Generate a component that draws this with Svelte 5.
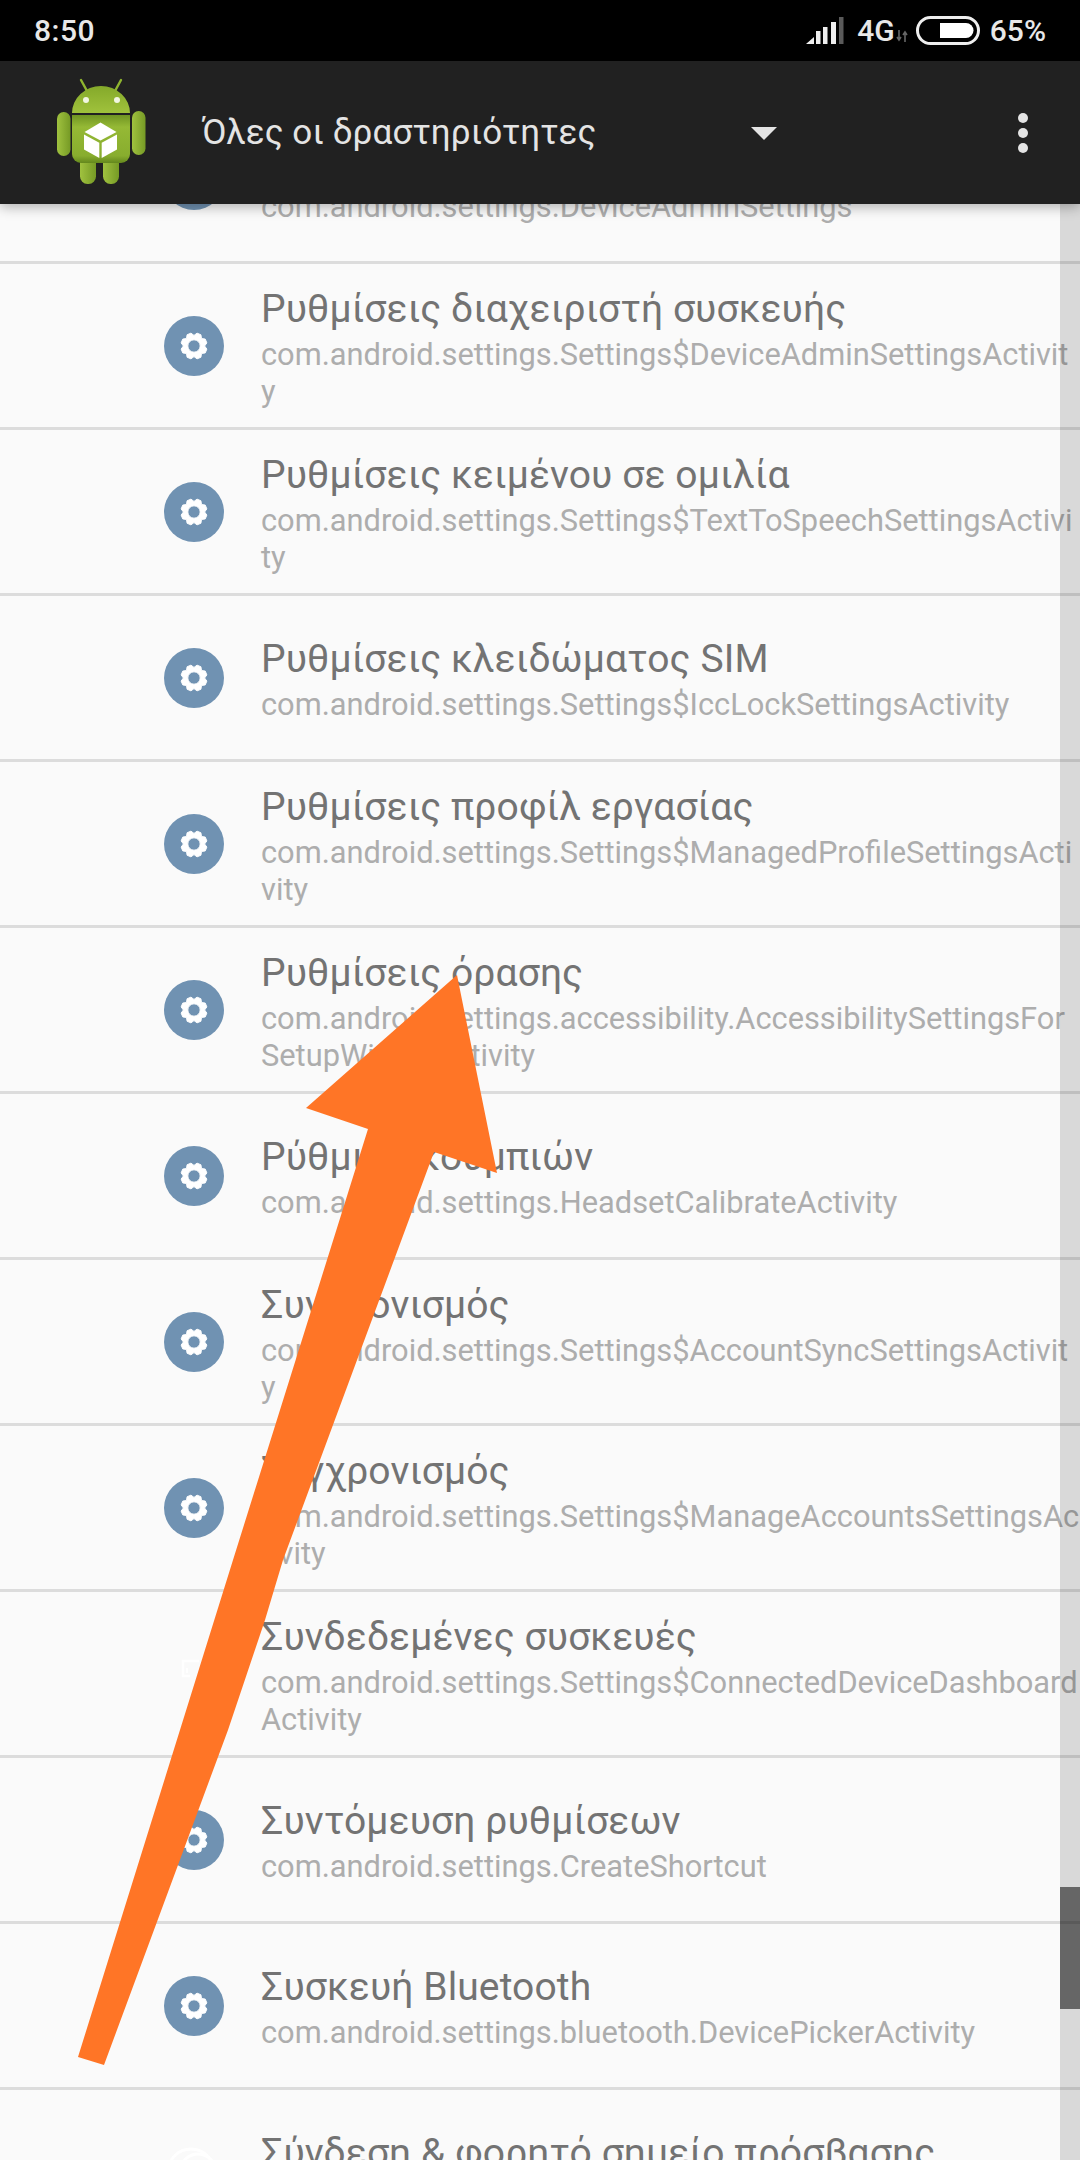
<script>
  const rows = [
    { title: 'Διαχειριστές συσκευής', lines: ['com.android.settings.DeviceAdminSettings'], icon: 'gear' },
    { title: 'Ρυθμίσεις διαχειριστή συσκευής', lines: ['com.android.settings.Settings$DeviceAdminSettingsActivit', 'y'], icon: 'gear' },
    { title: 'Ρυθμίσεις κειμένου σε ομιλία', lines: ['com.android.settings.Settings$TextToSpeechSettingsActivi', 'ty'], icon: 'gear' },
    { title: 'Ρυθμίσεις κλειδώματος SIM', lines: ['com.android.settings.Settings$IccLockSettingsActivity'], icon: 'gear' },
    { title: 'Ρυθμίσεις προφίλ εργασίας', lines: ['com.android.settings.Settings$ManagedProfileSettingsActi', 'vity'], icon: 'gear' },
    { title: 'Ρυθμίσεις όρασης', lines: ['com.android.settings.accessibility.AccessibilitySettingsFor', 'SetupWizardActivity'], icon: 'gear' },
    { title: 'Ρύθμιση κουμπιών', lines: ['com.android.settings.HeadsetCalibrateActivity'], icon: 'gear' },
    { title: 'Συγχρονισμός', lines: ['com.android.settings.Settings$AccountSyncSettingsActivit', 'y'], icon: 'gear' },
    { title: 'Συγχρονισμός', lines: ['com.android.settings.Settings$ManageAccountsSettingsAc', 'tivity'], icon: 'gear' },
    { title: 'Συνδεδεμένες συσκευές', lines: ['com.android.settings.Settings$ConnectedDeviceDashboard', 'Activity'], icon: 'device' },
    { title: 'Συντόμευση ρυθμίσεων', lines: ['com.android.settings.CreateShortcut'], icon: 'gear' },
    { title: 'Συσκευή Bluetooth', lines: ['com.android.settings.bluetooth.DevicePickerActivity'], icon: 'gear' },
    { title: 'Σύνδεση & φορητό σημείο πρόσβασης', lines: ['com.android.settings.Settings$WirelessSettingsActivity'], icon: 'link' }
  ];

  function gearPath() {
    const teeth = 8;
    const pts = [];
    for (let i = 0; i < teeth; i++) {
      const a = ((i + 0.5) / teeth) * Math.PI * 2;
      const s = (Math.PI * 2) / teeth;
      [[-0.5, 10.6], [-0.2, 13.2], [0.2, 13.2], [0.5, 10.6]].forEach(([o, r]) => {
        const t = a + o * s;
        pts.push((Math.sin(t) * r).toFixed(2) + ' ' + (-Math.cos(t) * r).toFixed(2));
      });
    }
    const hole = 'M-6.2 0a6.2 6.2 0 1 0 12.4 0a6.2 6.2 0 1 0 -12.4 0z';
    return 'M' + pts.join('L') + 'z' + hole;
  }
  const gear = gearPath();
</script>

<div class="screen">
  <div class="status">
    <span class="time">8:50</span>
    <div class="status-right">
      <svg class="signal" width="38" height="28" viewBox="0 0 38 28">
        <path d="M0 27 L8 27 L8 20 Z" fill="#eee" />
        <rect x="10" y="14" width="4.5" height="13" fill="#eee" />
        <rect x="17" y="10" width="4.5" height="17" fill="#eee" />
        <rect x="25" y="5" width="5" height="22" fill="#eee" />
        <rect x="33" y="0" width="4.5" height="27" fill="#5a5a5a" />
      </svg>
      <span class="net">4G</span>
      <svg class="updown" width="12" height="12" viewBox="0 0 12 12">
        <path d="M3 0v9M1 7l2 3 2-3" fill="none" stroke="#666" stroke-width="1.6" />
        <path d="M9 12V3M7 5l2-3 2 3" fill="none" stroke="#666" stroke-width="1.6" />
      </svg>
      <svg class="battery" width="64" height="29" viewBox="0 0 64 29">
        <rect x="1.5" y="1.5" width="61" height="26" rx="13" fill="none" stroke="#eee" stroke-width="3" />
        <path d="M24 7 H50 A7.5 7.5 0 0 1 50 22 H24 Z" fill="#fff" />
      </svg>
      <span class="pct">65%</span>
    </div>
  </div>

  <header class="toolbar">
    <svg class="logo" width="120" height="125" viewBox="0 0 120 125">
      <defs>
        <linearGradient id="g-head" x1="0" y1="0" x2="0" y2="1">
          <stop offset="0" stop-color="#84a92a" />
          <stop offset="1" stop-color="#a0c23c" />
        </linearGradient>
        <linearGradient id="g-body" x1="0" y1="0" x2="0" y2="1">
          <stop offset="0" stop-color="#6f9422" />
          <stop offset="0.25" stop-color="#95b935" />
          <stop offset="0.85" stop-color="#88ad2e" />
          <stop offset="1" stop-color="#64881d" />
        </linearGradient>
        <linearGradient id="g-limb" x1="0" y1="0" x2="1" y2="0">
          <stop offset="0" stop-color="#a0c23f" />
          <stop offset="1" stop-color="#769a25" />
        </linearGradient>
      </defs>
      <path d="M41 10 L47 21 M81 10 L75 21" stroke="#8fb52f" stroke-width="2.4" stroke-linecap="round" />
      <path d="M32 43 A29 27 0 0 1 90 43 Z" fill="url(#g-head)" />
      <circle cx="46" cy="30" r="3" fill="#f2f6e2" />
      <circle cx="77" cy="30" r="3" fill="#f2f6e2" />
      <rect x="17" y="42" width="13.5" height="44" rx="6.7" fill="url(#g-limb)" />
      <rect x="92" y="41" width="13.5" height="44" rx="6.7" fill="url(#g-limb)" />
      <rect x="40" y="84" width="16" height="30" rx="7.5" fill="url(#g-limb)" />
      <rect x="63" y="84" width="16" height="30" rx="7.5" fill="url(#g-limb)" />
      <path d="M32 45 H90 V84 A9 9 0 0 1 81 93 H41 A9 9 0 0 1 32 84 Z" fill="url(#g-body)" />
      <path d="M60.5 52.5 L76.5 62 L60.5 70.5 L44.5 62 Z" fill="#fff" />
      <path d="M44 64.5 L59.3 72.8 V88 L44 79.5 Z" fill="#fff" />
      <path d="M77 64.5 L61.7 72.8 V88 L77 79.5 Z" fill="#fff" />
    </svg>
    <span class="spinner-title">Όλες οι δραστηριότητες</span>
    <span class="caret"></span>
    <span class="more"><i></i><i></i><i></i></span>
  </header>

  <div class="list">
    {#each rows as row}
      <div class="row">
        <div class="icon-slot">
          {#if row.icon === 'gear'}
            <svg width="60" height="60" viewBox="-30 -30 60 60">
              <circle r="30" fill="#7092b2" />
              <path d={gear} fill="#fff" fill-rule="evenodd" stroke="#fff" stroke-width="1" stroke-linejoin="round" />
            </svg>
          {:else if row.icon === 'device'}
            <svg width="60" height="60" viewBox="-30 -30 60 60">
              <path d="M5 -13 H-11 V2 H-4" fill="none" stroke="#fff" stroke-width="2.5" />
              <path d="M-7 -6 V-1" fill="none" stroke="#fff" stroke-width="2" />
            </svg>
          {:else}
            <svg width="60" height="60" viewBox="-30 -30 60 60">
              <circle r="23" cx="-3" fill="none" stroke="#fff" stroke-width="3" />
              <circle r="18" cx="4" fill="none" stroke="#fff" stroke-width="3" />
            </svg>
          {/if}
        </div>
        <div class="text">
          <div class="title">{row.title}</div>
          {#each row.lines as line}
            <div class="sub">{line}</div>
          {/each}
        </div>
      </div>
    {/each}
  </div>

  <div class="scroll-track"><div class="scroll-thumb"></div></div>

  <svg class="arrow" width="1080" height="2160" viewBox="0 0 1080 2160">
    <path d="M457 975 L497 1173 L434 1152 L283 1560 L265 1620 L228 1730 L104 2065 L78 2057 L233 1560 L368 1129 L306 1108 Z" fill="#ff7526" />
  </svg>
</div>

<style>
  :global(body) {
    margin: 0;
    background: #fafafa;
  }
  .screen {
    position: relative;
    width: 1080px;
    height: 2160px;
    overflow: hidden;
    background: #fafafa;
    font-family: Roboto, "Noto Sans", sans-serif;
  }
  .status {
    position: relative;
    z-index: 4;
    height: 61px;
    background: #000;
    color: #e8e8e8;
    display: flex;
    align-items: center;
    padding: 0 34px;
    box-sizing: border-box;
    font-size: 30px;
    font-weight: 500;
    line-height: 61px;
  }
  .time { letter-spacing: 0.5px; }
  .status-right {
    margin-left: auto;
    display: flex;
    align-items: center;
  }
  .signal { margin-right: 13px; }
  .updown { margin: 10px 8px 0 1px; }
  .battery { margin-right: 10px; }
  .toolbar {
    position: relative;
    z-index: 3;
    height: 143px;
    background: #212121;
    display: flex;
    align-items: center;
    padding: 0 52px 0 40px;
    box-sizing: border-box;
    box-shadow: 0 3px 12px rgba(0, 0, 0, 0.3);
  }
  .logo { flex: none; }
  .spinner-title {
    flex: 1;
    margin-left: 42px;
    font-size: 35px;
    color: #e4e4e4;
    white-space: nowrap;
    letter-spacing: 0.1px;
  }
  .caret {
    width: 0;
    height: 0;
    border-left: 13px solid transparent;
    border-right: 13px solid transparent;
    border-top: 13px solid #e4e4e4;
    margin-top: 2px;
  }
  .more {
    margin-left: 241px;
    display: flex;
    flex-direction: column;
    gap: 5px;
    margin-top: 1px;
  }
  .more i {
    display: block;
    width: 10px;
    height: 10px;
    border-radius: 50%;
    background: #e4e4e4;
  }
  .list {
    margin-top: -106px;
  }
  .row {
    height: 166px;
    box-sizing: border-box;
    border-bottom: 3px solid #dcdcdc;
    display: flex;
    align-items: center;
  }
  .icon-slot {
    width: 60px;
    height: 60px;
    margin-left: 164px;
    margin-right: 37px;
    flex: none;
  }
  .icon-slot svg { display: block; }
  .text {
    min-width: 0;
    white-space: nowrap;
  }
  .title {
    font-size: 39px;
    line-height: 54px;
    color: #737373;
    letter-spacing: 0.1px;
  }
  .sub {
    font-size: 30.8px;
    line-height: 37px;
    color: #adadad;
  }
  .scroll-track {
    position: absolute;
    z-index: 2;
    right: 0;
    top: 204px;
    bottom: 0;
    width: 20px;
    background: rgba(0, 0, 0, 0.13);
  }
  .scroll-thumb {
    margin-top: 1683px;
    height: 122px;
    background: rgba(0, 0, 0, 0.53);
  }
  .arrow {
    position: absolute;
    left: 0;
    top: 0;
    z-index: 2;
    pointer-events: none;
  }
</style>
